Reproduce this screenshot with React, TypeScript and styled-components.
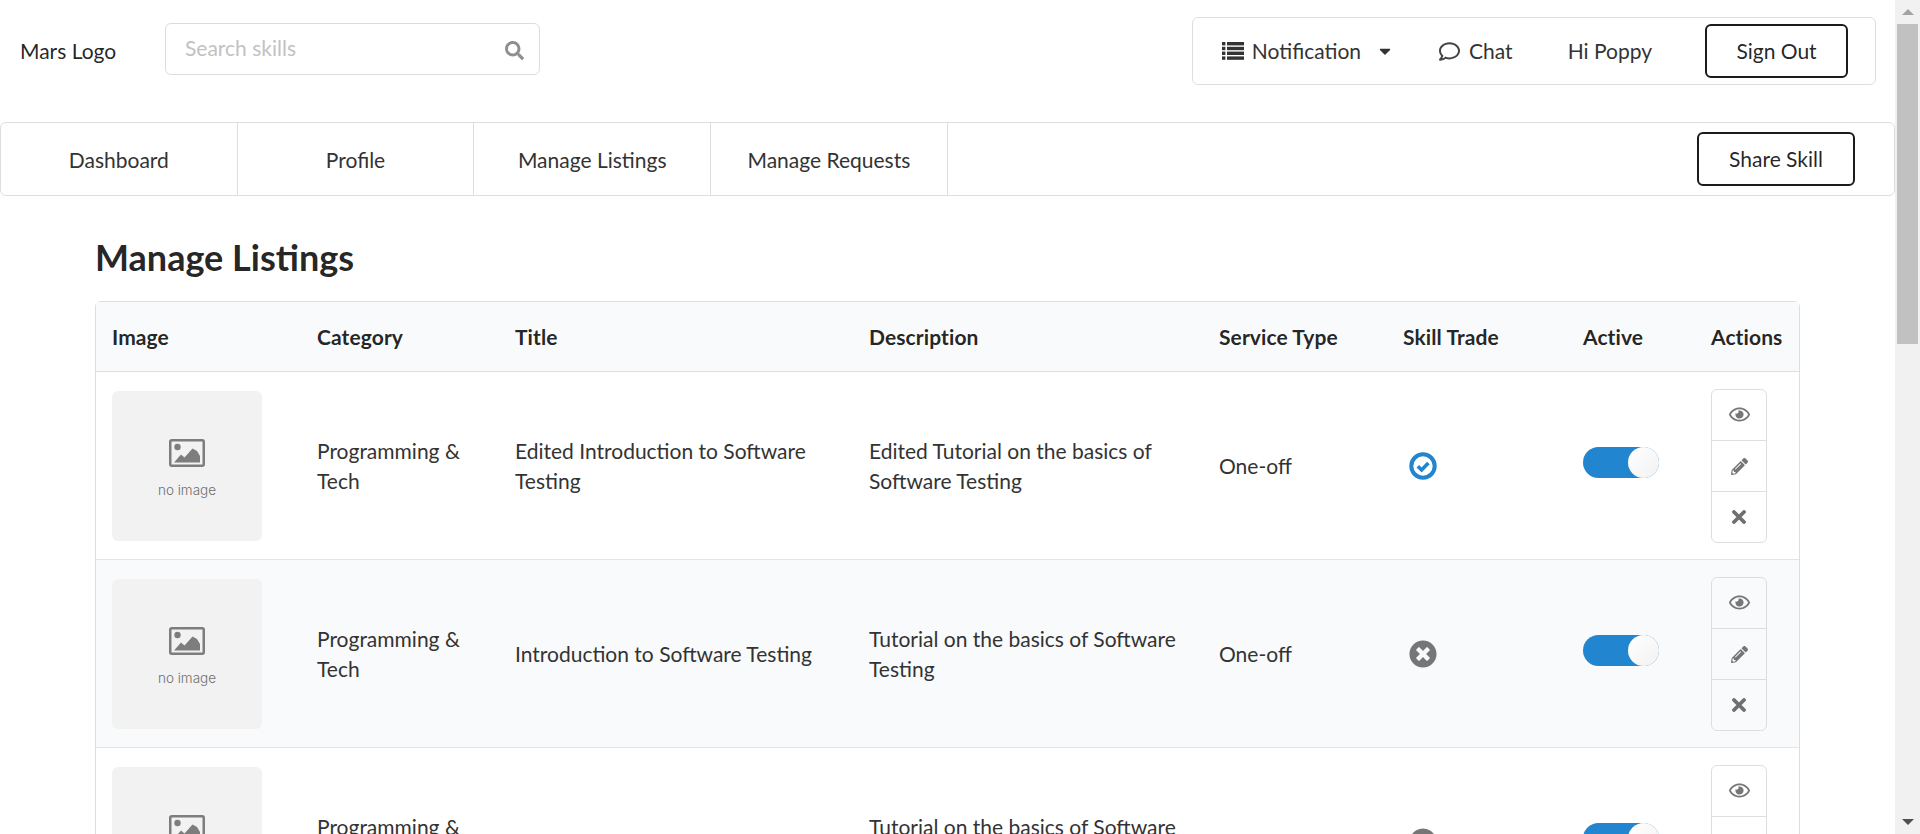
import React from "react";
import styled, { createGlobalStyle } from "styled-components";
import { FaSearch, FaRegComment, FaCaretDown, FaRegEye, FaPencilAlt, FaTimesCircle } from "react-icons/fa";

const Global = createGlobalStyle`
  html, body { margin: 0; padding: 0; height: 100%; overflow: hidden; background: #fff; }
  body { font-family: "Lato", "Helvetica Neue", Arial, sans-serif; font-size: 21px; line-height: 30px; color: rgba(0,0,0,.87); }
  * { box-sizing: border-box; }
`;

const Page = styled.div`display: flex; height: 834px; overflow: hidden;`;
const Main = styled.main`flex: 1; min-width: 0; overflow: hidden;`;

const ScrollTrack = styled.div`width: 25px; flex: none; background: #f1f1f1; display: flex; flex-direction: column; align-items: center;`;
const ScrollArrow = styled.div<{ $down?: boolean }>`
  height: 24px; width: 100%; display: flex; align-items: center; justify-content: center;
  &::before {
    content: ""; width: 0; height: 0; border-left: 6px solid transparent; border-right: 6px solid transparent;
    ${p => p.$down ? "border-top: 6px solid #505050;" : "border-bottom: 6px solid #a3a3a3;"}
  }
`;
const ScrollThumb = styled.div`width: 21px; height: 320px; background: #c1c1c1;`;
const ScrollSpacer = styled.div`flex: 1;`;

const Header = styled.header`display: flex; align-items: flex-start; height: 122px; padding: 17px 19px 0 20px;`;
const Logo = styled.div`line-height: 68px; width: 145px; flex: none;`;
const SearchBox = styled.div`
  width: 375px; height: 52px; margin-top: 6px; border: 1px solid #dcdcdc; border-radius: 6px;
  display: flex; align-items: center; justify-content: space-between; padding: 0 15px 0 19px;
`;
const SearchInput = styled.input`
  border: 0; outline: 0; padding: 0; margin-bottom: 2px; flex: 1; min-width: 0; font: inherit; color: inherit; background: none;
  &::placeholder { color: #c2c2c2; opacity: 1; }
`;
const SearchIcon = styled(FaSearch)`width: 19px; height: 19px; color: #8f8f8f; margin-top: 3px;`;

const UserMenu = styled.div`
  margin-left: auto; height: 68px; border: 1px solid #dedede; border-radius: 6px;
  display: flex; align-items: center; padding: 0 27px 0 29px;
`;
const MenuItem = styled.div<{ $gap: number }>`display: flex; align-items: center; margin-right: ${p => p.$gap}px; color: #333;`;
const ListGlyph = styled.svg`width: 22px; height: 18px; margin-right: 8px; flex: none;`;
const CaretIcon = styled(FaCaretDown)`width: 12px; height: 18px; margin-left: 18px; color: #333;`;
const ChatIcon = styled(FaRegComment)`width: 21px; height: 21px; margin-right: 9px; color: #444;`;
const OutlineButton = styled.button<{ $width: number }>`
  width: ${p => p.$width}px; height: 54px; background: #fff; border: 2px solid #1b1b1b; border-radius: 6px;
  font: inherit; color: rgba(0,0,0,.87); padding: 0;
`;

const Nav = styled.nav`
  display: flex; align-items: center; height: 74px; border: 1px solid #dedede; border-radius: 6px;
`;
const NavItem = styled.div`
  width: 236.7px; height: 100%; display: flex; align-items: center; justify-content: center; padding-top: 2px;
  border-right: 1px solid #dedede; color: #333;
`;
const NavAction = styled.div`margin-left: auto; margin-right: 39px;`;

const Content = styled.section`padding: 0 95px 0 95px;`;
const Title = styled.h2`font-size: 36px; line-height: 46px; font-weight: 700; margin: 38px 0 21px; color: rgba(0,0,0,.87);`;

const Table = styled.table`
  width: 100%; table-layout: fixed; border-collapse: separate; border-spacing: 0;
  border: 1px solid #dedede; border-radius: 6px;
`;
const HeadCell = styled.th<{ $width: number }>`
  width: ${p => p.$width}px; height: 70px; padding: 0 16px; text-align: left; font-weight: 700; letter-spacing: .1px;
  background: #f9fafb; border-bottom: 1px solid #dedede;
`;
const Row = styled.tr<{ $striped?: boolean }>`background: ${p => p.$striped ? "#f9fafb" : "#fff"};`;
const Cell = styled.td`padding: 17px 16px 16px; vertical-align: middle; border-bottom: 1px solid #e4e4e5; color: #333;`;

const Thumb = styled.div`
  width: 150px; height: 150px; background: #f2f2f2; border-radius: 6px;
  display: flex; flex-direction: column; align-items: center; justify-content: center; padding-top: 4px;
`;
const ThumbCaption = styled.div`font-family: "Inter", "Lato", sans-serif; font-size: 13.5px; line-height: 16px; font-weight: 300; color: #6f6f6f; margin-top: 15px;`;

const TradeGlyph = styled.svg`display: block; width: 28px; height: 28px; margin-left: 6px;`;
const TradeCross = styled(FaTimesCircle)`display: block; width: 28px; height: 28px; margin-left: 6px; color: #767676;`;

const Toggle = styled.div`width: 76px; height: 31px; margin-bottom: 8px; border-radius: 16px; background: #2185d0; display: flex; justify-content: flex-end;`;
const ToggleKnob = styled.div`
  width: 31px; height: 31px; border-radius: 50%;
  background: linear-gradient(135deg, #fff, #f2f2f2);
`;

const ActionGroup = styled.div`width: 56px; height: 154px; border: 1px solid #dedede; border-radius: 6px; display: flex; flex-direction: column;`;
const ActionButton = styled.div`
  flex: 1; display: flex; align-items: center; justify-content: center; color: #767676;
  & + & { border-top: 1px solid #dedede; }
`;
const EyeIcon = styled(FaRegEye)`width: 21px; height: 21px; margin-bottom: 2px;`;
const PencilIcon = styled(FaPencilAlt)`width: 17px; height: 17px;`;
const CrossGlyph = styled.svg`width: 14px; height: 14px;`;

const NoImageGlyph = () => (
  <svg width="36" height="28" viewBox="0 0 36 28" aria-hidden="true">
    <rect x="1.25" y="1.25" width="33.5" height="25.5" rx="1.5" fill="none" stroke="#7d7d7d" strokeWidth="2.5" />
    <circle cx="8.5" cy="8" r="3.2" fill="#7d7d7d" />
    <path d="M5 23.5 L12 15.5 L15.5 18.5 L23.5 9.5 L28 12 L31 17 L31 23.5 Z" fill="#7d7d7d" />
  </svg>
);

const ListIcon = () => (
  <ListGlyph viewBox="0 0 22 18" aria-hidden="true">
    {[0, 4.8, 9.6, 14.4].map(y => (
      <g key={y} fill="#333">
        <rect x="0" y={y} width="3.4" height="3.4" />
        <rect x="5" y={y} width="17" height="3.4" />
      </g>
    ))}
  </ListGlyph>
);

const TradeCheck = () => (
  <TradeGlyph viewBox="0 0 28 28" aria-hidden="true">
    <circle cx="14" cy="14" r="11.7" fill="none" stroke="#2185d0" strokeWidth="4" />
    <path d="M8.8 14.2 L12.6 18 L19.4 11" fill="none" stroke="#2185d0" strokeWidth="3.6" />
  </TradeGlyph>
);

const CrossIcon = () => (
  <CrossGlyph viewBox="0 0 14 14" aria-hidden="true">
    <path d="M2 2 L12 12 M12 2 L2 12" stroke="#6f6f6f" strokeWidth="3.8" strokeLinecap="round" />
  </CrossGlyph>
);

type Listing = { title: string; description: string; trade: boolean };
const listings: Listing[] = [
  { title: "Edited Introduction to Software Testing", description: "Edited Tutorial on the basics of Software Testing", trade: true },
  { title: "Introduction to Software Testing", description: "Tutorial on the basics of Software Testing", trade: false },
  { title: "Introduction to Software Testing", description: "Tutorial on the basics of Software Testing", trade: false },
];
const columns: [string, number][] = [
  ["Image", 205], ["Category", 198], ["Title", 354], ["Description", 350],
  ["Service Type", 184], ["Skill Trade", 180], ["Active", 128], ["Actions", 104],
];
const tabs = ["Dashboard", "Profile", "Manage Listings", "Manage Requests"];

export default function App() {
  return (
    <>
      <Global />
      <Page>
        <Main>
          <Header>
            <Logo>Mars Logo</Logo>
            <SearchBox>
              <SearchInput placeholder="Search skills" />
              <SearchIcon />
            </SearchBox>
            <UserMenu>
              <MenuItem $gap={48}><ListIcon />Notification<CaretIcon /></MenuItem>
              <MenuItem $gap={55}><ChatIcon />Chat</MenuItem>
              <MenuItem $gap={53}>Hi Poppy</MenuItem>
              <OutlineButton $width={143}>Sign Out</OutlineButton>
            </UserMenu>
          </Header>
          <Nav>
            {tabs.map(t => <NavItem key={t}>{t}</NavItem>)}
            <NavAction><OutlineButton $width={158}>Share Skill</OutlineButton></NavAction>
          </Nav>
          <Content>
            <Title>Manage Listings</Title>
            <Table>
              <thead>
                <tr>{columns.map(([name, w]) => <HeadCell key={name} $width={w}>{name}</HeadCell>)}</tr>
              </thead>
              <tbody>
                {listings.map((l, i) => (
                  <Row key={i} $striped={i % 2 === 1}>
                    <Cell>
                      <Thumb><NoImageGlyph /><ThumbCaption>no image</ThumbCaption></Thumb>
                    </Cell>
                    <Cell>Programming &amp; Tech</Cell>
                    <Cell>{l.title}</Cell>
                    <Cell>{l.description}</Cell>
                    <Cell>One-off</Cell>
                    <Cell>{l.trade ? <TradeCheck /> : <TradeCross />}</Cell>
                    <Cell><Toggle><ToggleKnob /></Toggle></Cell>
                    <Cell>
                      <ActionGroup>
                        <ActionButton><EyeIcon /></ActionButton>
                        <ActionButton><PencilIcon /></ActionButton>
                        <ActionButton><CrossIcon /></ActionButton>
                      </ActionGroup>
                    </Cell>
                  </Row>
                ))}
              </tbody>
            </Table>
          </Content>
        </Main>
        <ScrollTrack>
          <ScrollArrow />
          <ScrollThumb />
          <ScrollSpacer />
          <ScrollArrow $down />
        </ScrollTrack>
      </Page>
    </>
  );
}
